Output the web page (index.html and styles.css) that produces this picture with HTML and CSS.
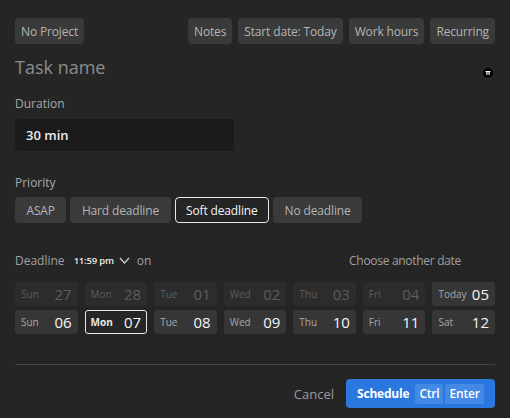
FILE: index.html
```html
<!DOCTYPE html>
<html>
<head>
<meta charset="utf-8">
<link rel="stylesheet" href="styles.css">
</head>
<body>
<div class="dialog">
  <div class="toprow">
    <button class="chip">No Project</button>
    <div class="chips-right">
      <button class="chip">Notes</button>
      <button class="chip">Start date: Today</button>
      <button class="chip">Work hours</button>
      <button class="chip">Recurring</button>
    </div>
  </div>
  <div class="titlerow">
    <div class="taskname">Task name</div>
    <span class="ext-icon"><svg width="10" height="10" viewBox="0 0 10 10"><circle cx="5" cy="5" r="5" fill="#000"/><rect x="2.6" y="3" width="4.8" height="1.2" fill="#fff"/><rect x="3.4" y="4" width="1.1" height="3" fill="#fff"/><rect x="5.5" y="4" width="1.1" height="3" fill="#fff"/></svg></span>
  </div>
  <div class="label">Duration</div>
  <div class="input">30 min</div>
  <div class="label priority-label">Priority</div>
  <div class="prio">
    <button class="chip big">ASAP</button>
    <button class="chip big">Hard deadline</button>
    <button class="chip big selected">Soft deadline</button>
    <button class="chip big">No deadline</button>
  </div>
  <div class="deadline-row">
    <span class="dl-label">Deadline</span>
    <span class="time">11:59 pm</span>
    <svg class="chev" width="11" height="7" viewBox="0 0 11 7"><path d="M1 1 L5.5 6 L10 1" fill="none" stroke="#d0d0d0" stroke-width="1.2"/></svg>
    <span class="on">on</span>
    <span class="choose">Choose another date</span>
  </div>
  <div class="dates">
    <div class="day past"><span class="dn">Sun</span><span class="num">27</span></div>
    <div class="day past"><span class="dn">Mon</span><span class="num">28</span></div>
    <div class="day past"><span class="dn">Tue</span><span class="num">01</span></div>
    <div class="day past"><span class="dn">Wed</span><span class="num">02</span></div>
    <div class="day past"><span class="dn">Thu</span><span class="num">03</span></div>
    <div class="day past"><span class="dn">Fri</span><span class="num">04</span></div>
    <div class="day"><span class="dn">Today</span><span class="num">05</span></div>
    <div class="day"><span class="dn">Sun</span><span class="num">06</span></div>
    <div class="day sel"><span class="dn">Mon</span><span class="num">07</span></div>
    <div class="day"><span class="dn">Tue</span><span class="num">08</span></div>
    <div class="day"><span class="dn">Wed</span><span class="num">09</span></div>
    <div class="day"><span class="dn">Thu</span><span class="num">10</span></div>
    <div class="day"><span class="dn">Fri</span><span class="num">11</span></div>
    <div class="day"><span class="dn">Sat</span><span class="num">12</span></div>
  </div>
  <div class="divider"></div>
  <div class="footer">
    <span class="cancel">Cancel</span>
    <button class="schedule">Schedule <span class="key first">Ctrl</span><span class="key">Enter</span></button>
  </div>
</div>
</body>
</html>
```

FILE: styles.css
```css
html, body {
  margin: 0;
  padding: 0;
  background: #252525;
  font-family: "Open Sans", "Noto Sans", sans-serif;
}
.dialog {
  width: 480px;
  padding: 18px 15px 0 15px;
}
.toprow {
  display: flex;
  align-items: center;
}
.chips-right {
  margin-left: auto;
  display: flex;
  gap: 6px;
}
.chip {
  height: 26px;
  padding: 0 5px;
  border: 1px solid transparent;
  border-radius: 4px;
  background: #3a3a3a;
  color: #b4b4b4;
  font-family: inherit;
  font-size: 12px;
  letter-spacing: -0.15px;
}
.titlerow {
  display: flex;
  align-items: center;
  margin-top: 10px;
  height: 26px;
}
.taskname {
  font-size: 18px;
  color: #8c8c8c;
}
.ext-icon {
  margin-left: auto;
  margin-right: 2px;
  margin-top: 12px;
  display: flex;
}
.label {
  margin-top: 16px;
  font-size: 12px;
  color: #a8a8a8;
  line-height: 16px;
}
.input {
  margin-top: 7px;
  width: 208px;
  height: 32px;
  padding-left: 11px;
  line-height: 32px;
  background: #1b1b1b;
  border-radius: 3px;
  color: #ececec;
  font-size: 13px;
  font-weight: 600;
}
.priority-label {
  margin-top: 24px;
}
.prio {
  display: flex;
  gap: 4px;
  margin-top: 6px;
}
.chip.big {
  padding: 0 10.5px;
  font-size: 12px;
}
.chip.selected {
  background: transparent;
  border-color: #e8e8e8;
  color: #f2f2f2;
}
.deadline-row {
  display: flex;
  align-items: center;
  margin-top: 27px;
  height: 20px;
  font-size: 12px;
  color: #a0a0a0;
}
.time {
  margin-left: 9px;
  font-size: 9.5px;
  font-weight: 600;
  letter-spacing: -0.2px;
  color: #e8e8e8;
}
.chev {
  margin-left: 5px;
}
.on {
  margin-left: 7px;
}
.choose {
  margin-left: auto;
  margin-right: 34px;
  letter-spacing: -0.3px;
}
.dates {
  display: grid;
  grid-template-columns: repeat(7, 1fr);
  column-gap: 7px;
  row-gap: 4px;
  margin-top: 12px;
}
.day {
  height: 24px;
  border: 1px solid transparent;
  border-radius: 3px;
  background: #363636;
  display: flex;
  align-items: center;
  justify-content: space-between;
  padding: 0 5px 0 5px;
  box-sizing: border-box;
}
.dn {
  font-size: 10px;
  color: #a8a8a8;
}
.num {
  font-size: 15px;
  color: #f4f4f4;
}
.day.past {
  background: #2c2c2c;
}
.day.past .dn, .day.past .num {
  color: #5c5c5c;
}
.day.sel {
  background: #262626;
  border-color: #e8e8e8;
}
.day.sel .dn {
  color: #e8e8e8;
  font-weight: 700;
}
.divider {
  margin-top: 30px;
  height: 1px;
  background: #454545;
}
.footer {
  display: flex;
  align-items: center;
  justify-content: flex-end;
  margin-top: 14px;
}
.cancel {
  font-size: 13px;
  color: #9a9a9a;
  margin-right: 12px;
}
.schedule {
  height: 29px;
  width: 149px;
  border: none;
  border-radius: 4px;
  background: #2a77df;
  color: #ffffff;
  font-family: inherit;
  font-size: 12px;
  font-weight: 700;
  display: flex;
  align-items: center;
  padding: 0 0 0 11px;
  gap: 2px;
  letter-spacing: -0.2px;
}
.key {
  background: #4389e6;
  height: 20px;
  line-height: 20px;
  padding: 0 4px;
  border-radius: 2px;
  font-weight: 600;
}
.key.first {
  margin-left: 4px;
}
```
